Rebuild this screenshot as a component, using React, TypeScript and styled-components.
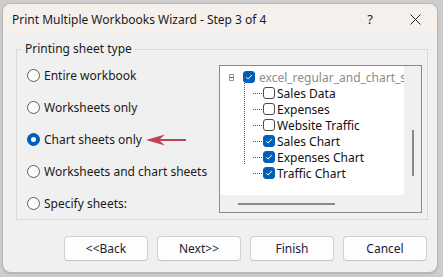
import React from "react";
import styled, { createGlobalStyle } from "styled-components";

const Global = createGlobalStyle`
  html, body { margin: 0; padding: 0; }
  body {
    background: #cdcdcd;
    font-family: "Noto Sans", "Open Sans", sans-serif;
    font-size: 12px;
    color: #1a1a1a;
    width: 443px;
    height: 277px;
    overflow: hidden;
  }
`;

const Window = styled.div`
  margin: 4px 0 0 3px;
  width: 434px;
  height: 268px;
  border-radius: 8px;
  background: #f0f0f0;
  box-shadow: 0 0 0 1px #b8b8b8, 0 1px 3px rgba(0,0,0,0.25);
  overflow: hidden;
  display: flex;
  flex-direction: column;
`;

const TitleBar = styled.div`
  height: 30px;
  background: #f6f0ec;
  display: flex;
  align-items: center;
  padding-left: 9px;
`;

const Title = styled.div`
  flex: 1;
  font-size: 12px;
  color: #1a1a1a;
  padding-top: 1px;
`;

const TitleButton = styled.div<{ $w: number }>`
  width: ${(p) => p.$w}px;
  height: 30px;
  display: flex;
  align-items: center;
  justify-content: center;
  font-size: 13px;
  color: #222;
`;

const Body = styled.div`
  flex: 1;
  display: flex;
  flex-direction: column;
  padding: 9px 10px 0 13px;
`;

const Group = styled.fieldset`
  margin: 0;
  padding: 0 5px 0 0;
  border: 1px solid #d8d8d8;
  height: 177px;
  box-sizing: border-box;
  display: grid;
  grid-template-columns: 202px 203px;
  align-items: start;
`;

const Legend = styled.legend`
  margin-left: 5px;
  padding: 0 3px;
  font-size: 12px;
  line-height: 12px;
  color: #1a1a1a;
`;

const RadioList = styled.div`
  display: flex;
  flex-direction: column;
  gap: 13px;
  padding: 11px 0 0 10px;
`;

const RadioRow = styled.label`
  display: flex;
  align-items: center;
  gap: 4px;
  height: 19px;
  white-space: nowrap;
`;

const RadioCircle = styled.span<{ $on?: boolean }>`
  width: 13px;
  height: 13px;
  box-sizing: border-box;
  border-radius: 50%;
  border: 1px solid ${(p) => (p.$on ? "#005fb8" : "#5c5c5c")};
  background: ${(p) => (p.$on ? "#005fb8" : "#fdfdfd")};
  display: flex;
  align-items: center;
  justify-content: center;
  flex: none;
  &::after {
    content: "";
    display: ${(p) => (p.$on ? "block" : "none")};
    width: 5px;
    height: 5px;
    border-radius: 50%;
    background: #fff;
  }
`;

const Arrow = styled.svg`
  flex: none;
`;

const ListBox = styled.div`
  margin-top: 10px;
  height: 148px;
  box-sizing: border-box;
  border: 1px solid #8a8a8a;
  background: #f0f0f0;
  display: grid;
  grid-template-columns: 184px 17px;
  grid-template-rows: 129px 17px;
`;

const TreeArea = styled.div`
  background: #fff;
  border-bottom-right-radius: 3px;
  position: relative;
  overflow: hidden;
  padding: 3px 0 0 9px;
`;

const VScroll = styled.div`
  display: flex;
  justify-content: center;
  padding-top: 64px;
  & > div {
    width: 2px;
    height: 46px;
    background: #8a8a8a;
  }
`;

const HScroll = styled.div`
  display: flex;
  align-items: center;
  padding-left: 18px;
  & > div {
    width: 97px;
    height: 2px;
    background: #8a8a8a;
  }
`;

const TreeRow = styled.div<{ $child?: boolean }>`
  display: flex;
  align-items: center;
  height: 16px;
  white-space: nowrap;
  padding-left: ${(p) => (p.$child ? "34px" : "0")};
  position: relative;
`;

const Expander = styled.span`
  width: 7px;
  height: 7px;
  box-sizing: border-box;
  border: 1px solid #9a9a9a;
  background: #fff;
  display: flex;
  align-items: center;
  justify-content: center;
  margin-right: 7px;
  &::after {
    content: "";
    width: 3px;
    height: 1px;
    background: #555;
  }
`;

const Check = styled.span<{ $on?: boolean; $root?: boolean }>`
  width: 12px;
  height: 12px;
  box-sizing: border-box;
  border-radius: 3px;
  border: 1px solid ${(p) => (p.$on ? "#005fb8" : "#4a4a4a")};
  background: ${(p) => (p.$on ? "#005fb8" : "#fff")};
  display: flex;
  align-items: center;
  justify-content: center;
  flex: none;
  margin-left: ${(p) => (p.$root ? "2px" : "0")};
  margin-right: ${(p) => (p.$root ? "4px" : "2px")};
`;

const TreeText = styled.span<{ $muted?: boolean }>`
  color: ${(p) => (p.$muted ? "#8c8c8c" : "#111")};
  font-size: 12px;
`;

const DotsV = styled.div`
  position: absolute;
  left: 24px;
  top: 12px;
  height: 86px;
  border-left: 1px dotted #555;
`;

const DotsH = styled.span`
  position: absolute;
  left: 24px;
  top: 8px;
  width: 9px;
  border-top: 1px dotted #555;
`;

const Footer = styled.div`
  display: flex;
  justify-content: flex-end;
  gap: 9px;
  padding: 16px 0 0 0;
`;

const Button = styled.button`
  width: 84px;
  height: 25px;
  box-sizing: border-box;
  background: #fdfdfd;
  border: 1px solid #d0d0d0;
  border-bottom-color: #c4c4c4;
  border-radius: 4px;
  font-family: inherit;
  font-size: 12px;
  color: #1b1b38;
  padding: 0;
`;

const Tick = () => (
  <svg width="8" height="8" viewBox="0 0 8 8">
    <path d="M1.2 4.2 L3.2 6 L6.8 2" fill="none" stroke="#fff" strokeWidth="1" />
  </svg>
);

const radios = [
  { label: "Entire workbook" },
  { label: "Worksheets only" },
  { label: "Chart sheets only", on: true, arrow: true },
  { label: "Worksheets and chart sheets" },
  { label: "Specify sheets:" },
];

const sheets = [
  { name: "Sales Data", on: false },
  { name: "Expenses", on: false },
  { name: "Website Traffic", on: false },
  { name: "Sales Chart", on: true },
  { name: "Expenses Chart", on: true },
  { name: "Traffic Chart", on: true },
];

export default function App() {
  return (
    <>
      <Global />
      <Window>
        <TitleBar>
          <Title>Print Multiple Workbooks Wizard - Step 3 of 4</Title>
          <TitleButton $w={46}>?</TitleButton>
          <TitleButton $w={44}>
            <svg width="11" height="11" viewBox="0 0 11 11">
              <path d="M0.5 0.5 L10.5 10.5 M10.5 0.5 L0.5 10.5" stroke="#222" strokeWidth="1" />
            </svg>
          </TitleButton>
        </TitleBar>
        <Body>
          <Group>
            <Legend>Printing sheet type</Legend>
            <RadioList>
              {radios.map((r) => (
                <RadioRow key={r.label}>
                  <RadioCircle $on={r.on} />
                  <span>{r.label}</span>
                  {r.arrow && (
                    <Arrow width="41" height="12" viewBox="0 0 41 12">
                      <path d="M0 6 L19 0.5 L14 5 L40 5 L40 7 L14 7 L19 11.5 Z" fill="#c0425a" />
                    </Arrow>
                  )}
                </RadioRow>
              ))}
            </RadioList>
            <ListBox>
              <TreeArea>
                <TreeRow>
                  <Expander />
                  <Check $on $root>
                    <Tick />
                  </Check>
                  <TreeText $muted>excel_regular_and_chart_s</TreeText>
                </TreeRow>
                <DotsV />
                {sheets.map((s) => (
                  <TreeRow $child key={s.name}>
                    <DotsH />
                    <Check $on={s.on}>{s.on && <Tick />}</Check>
                    <TreeText>{s.name}</TreeText>
                  </TreeRow>
                ))}
              </TreeArea>
              <VScroll>
                <div />
              </VScroll>
              <HScroll>
                <div />
              </HScroll>
              <div />
            </ListBox>
          </Group>
          <Footer>
            <Button>&lt;&lt;Back</Button>
            <Button>Next&gt;&gt;</Button>
            <Button>Finish</Button>
            <Button>Cancel</Button>
          </Footer>
        </Body>
      </Window>
    </>
  );
}
